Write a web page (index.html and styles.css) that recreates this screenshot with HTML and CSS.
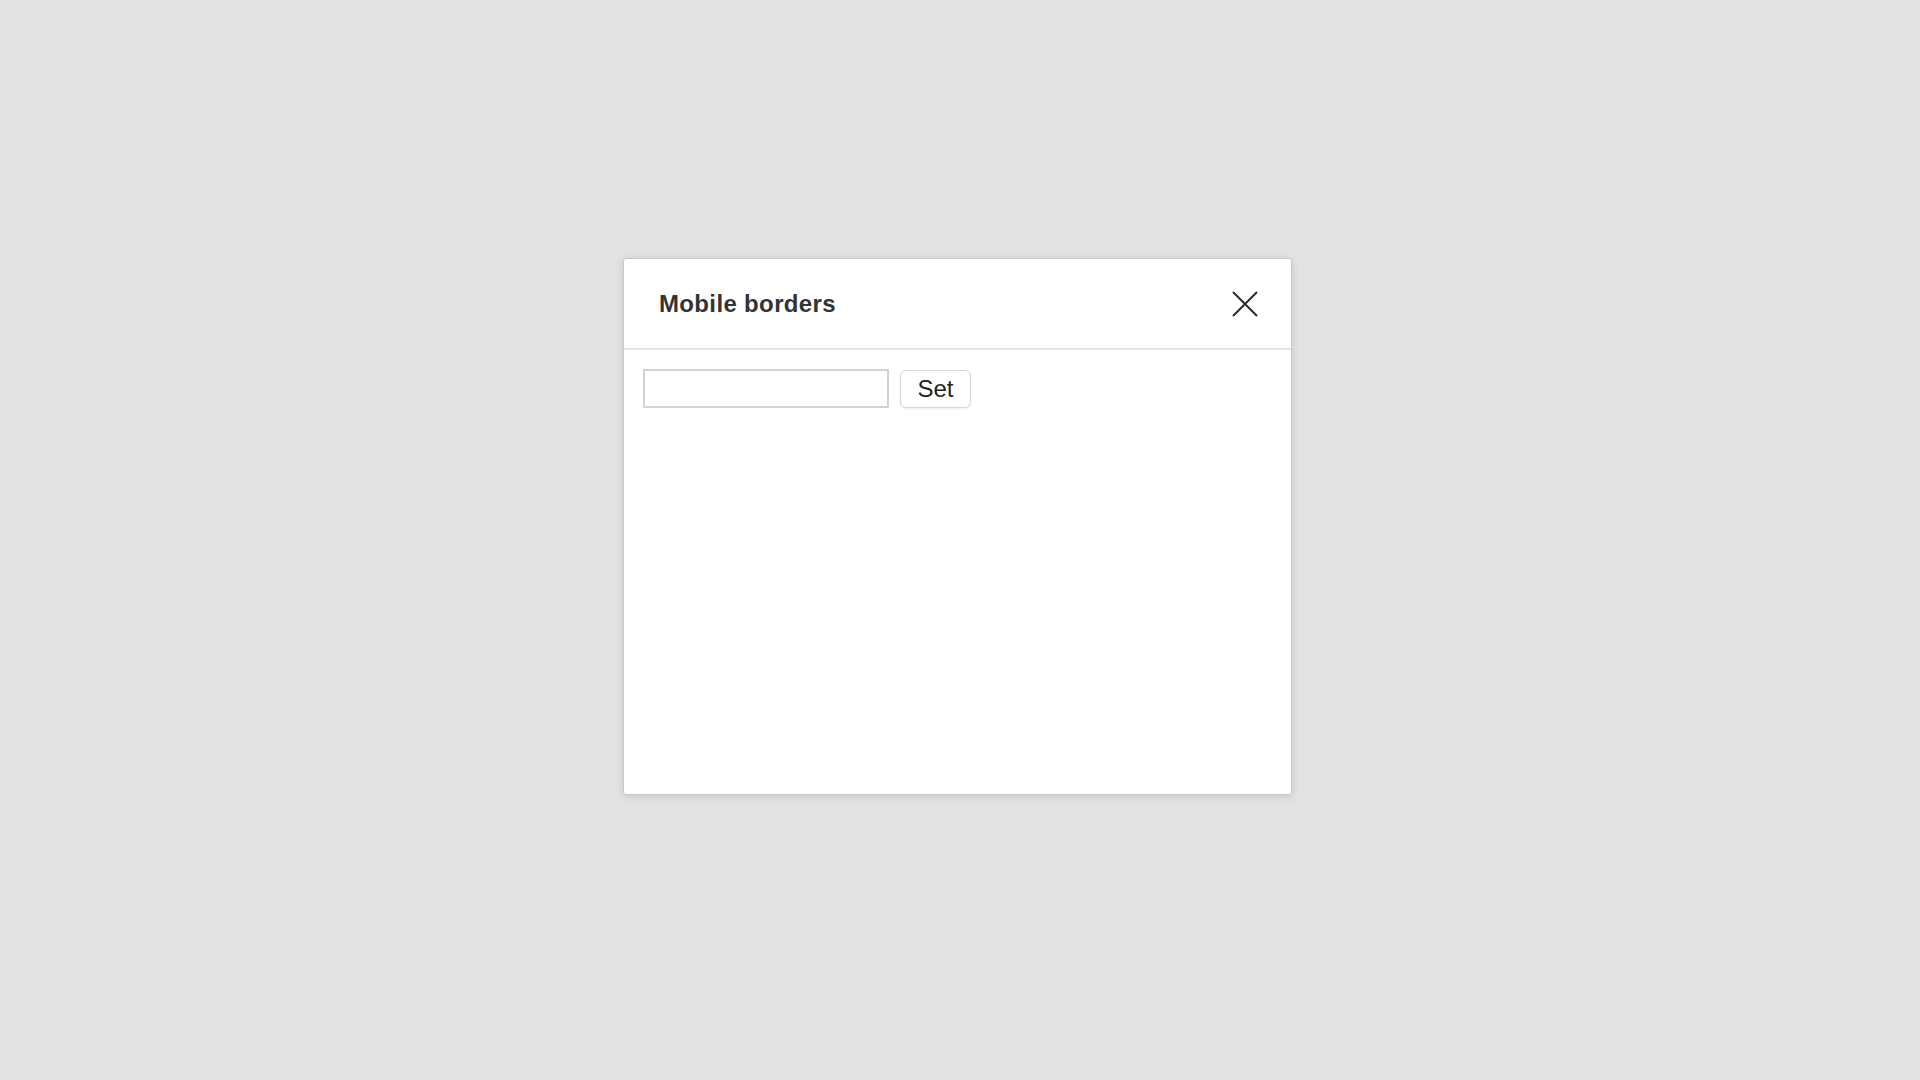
FILE: index.html
```html
<!DOCTYPE html>
<html>
<head>
<meta charset="utf-8">
<link rel="stylesheet" href="styles.css">
</head>
<body>
<div class="stage">
  <div class="dialog">
    <div class="dialog-header">
      <h2 class="dialog-title">Mobile borders</h2>
      <button class="close-btn" aria-label="Close">
        <svg width="26" height="26" viewBox="0 0 26 26"><path d="M1 1 L25 25 M25 1 L1 25" stroke="#2b2b2b" stroke-width="2" fill="none"/></svg>
      </button>
    </div>
    <div class="dialog-body">
      <input class="text-input" type="text">
      <button class="set-btn">Set</button>
    </div>
  </div>
</div>
</body>
</html>
```
FILE: styles.css
```css
html, body {
  margin: 0;
  padding: 0;
  height: 100%;
}
body {
  background: #e3e3e3;
  font-family: "Liberation Sans", Arial, sans-serif;
}
.stage {
  height: 100%;
  display: flex;
  justify-content: center;
  padding-top: 258px;
  padding-right: 5px;
  box-sizing: border-box;
}
.dialog {
  width: 669px;
  height: 537px;
  box-sizing: border-box;
  background: #fff;
  border: 1px solid #c9c9c9;
  border-radius: 3px;
  box-shadow: 0 2px 8px rgba(0,0,0,0.12);
  display: flex;
  flex-direction: column;
}
.dialog-header {
  height: 89px;
  border-bottom: 2px solid #e6e6e6;
  display: flex;
  align-items: center;
  justify-content: space-between;
  padding: 0 33px 0 35px;
  flex-shrink: 0;
}
.dialog-title {
  margin: 0;
  font-size: 24px;
  font-weight: bold;
  letter-spacing: 0.35px;
  color: #333;
}
.close-btn {
  background: none;
  border: none;
  padding: 0;
  width: 26px;
  height: 26px;
  display: flex;
  cursor: pointer;
}
.dialog-body {
  padding: 19px 19px;
  display: flex;
  align-items: center;
  gap: 11px;
}
.text-input {
  width: 246px;
  height: 39px;
  box-sizing: border-box;
  border: 2px solid #d2d2d2;
  border-radius: 1px;
  margin: 0;
  padding: 0 6px;
  font-size: 18px;
}
.set-btn {
  width: 71px;
  height: 38px;
  box-sizing: border-box;
  background: #fff;
  border: 1px solid #d6d6d6;
  border-radius: 6px;
  box-shadow: 0 1px 2px rgba(0,0,0,0.08);
  font-family: "Liberation Sans", Arial, sans-serif;
  font-size: 24px;
  line-height: 36px;
  padding: 0;
  color: #222;
  margin: 0;
}
```
